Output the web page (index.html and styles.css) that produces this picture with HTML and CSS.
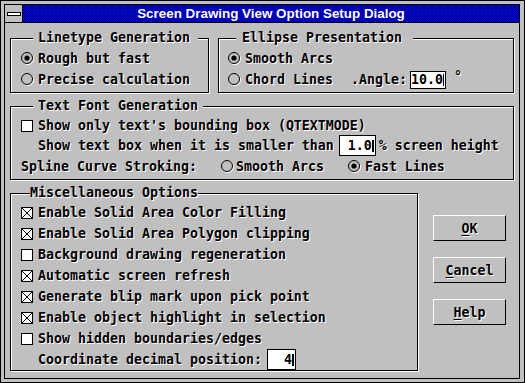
FILE: index.html
```html
<!doctype html>
<html lang="en">
<head>
<meta charset="UTF-8">
<title>Screen Drawing View Option Setup Dialog</title>
<link rel="stylesheet" href="styles.css">
</head>
<body>
<svg class="defs" width="0" height="0" aria-hidden="true">
    <symbol id="radioOff" viewBox="0 0 13 13">
        <circle cx="7" cy="7" r="5.5" fill="none" stroke="#fff"/>
        <circle cx="6" cy="6" r="5.5" fill="#c0c0c0" stroke="#000"/>
    </symbol>
    <symbol id="radioOn" viewBox="0 0 13 13">
        <circle cx="7" cy="7" r="5.5" fill="none" stroke="#fff"/>
        <circle cx="6" cy="6" r="5.5" fill="#c0c0c0" stroke="#000"/>
        <circle cx="6" cy="6" r="2.6" fill="#000"/>
    </symbol>
    <symbol id="checkOff" viewBox="0 0 12 12">
        <rect x=".5" y=".5" width="11" height="11" fill="#fff" stroke="#000" shape-rendering="crispEdges"/>
    </symbol>
    <symbol id="checkOn" viewBox="0 0 12 12">
        <rect x=".5" y=".5" width="11" height="11" fill="#fff" stroke="#000" shape-rendering="crispEdges"/>
        <path d="M1 1 11 11 M11 1 1 11" stroke="#000" stroke-width="1"/>
    </symbol>
</svg>

<div class="window">
<div class="frame">
    <div class="titlebar">
        <div class="sysmenu"><div class="sysbar"></div></div>
        <div class="caption">Screen Drawing View Option Setup Dialog</div>
    </div>
    <div class="client">
        <div class="rowTop">
            <div class="group groupLinetype">
                <div class="groupTitle">Linetype Generation</div>
                <div class="opt"><svg class="radio"><use href="#radioOn"/></svg>Rough but fast</div>
                <div class="opt"><svg class="radio"><use href="#radioOff"/></svg>Precise calculation</div>
            </div>
            <div class="group groupEllipse">
                <div class="groupTitle">Ellipse Presentation</div>
                <div class="opt"><svg class="radio"><use href="#radioOn"/></svg>Smooth Arcs</div>
                <div class="opt">
                    <svg class="radio"><use href="#radioOff"/></svg><span>Chord Lines</span>
                    <span class="angleLabel">.Angle:</span>
                    <div class="field fieldAngle">10.0<span class="caret"></span></div>
                    <span class="degree">&deg;</span>
                </div>
            </div>
        </div>

        <div class="group groupText">
            <div class="groupTitle">Text Font Generation</div>
            <div class="opt optShort"><svg class="check"><use href="#checkOff"/></svg>Show only text's bounding box (QTEXTMODE)</div>
            <div class="opt">
                <span class="indent">Show text box when it is smaller than</span>
                <div class="field fieldHeight">1.0<span class="caret"></span></div>
                <span class="unit">% screen height</span>
            </div>
            <div class="opt">
                <span>Spline Curve Stroking:</span>
                <svg class="radio radioSmooth"><use href="#radioOff"/></svg><span>Smooth Arcs</span>
                <svg class="radio radioFast"><use href="#radioOn"/></svg><span>Fast Lines</span>
            </div>
        </div>

        <div class="rowBottom">
            <div class="group groupMisc">
                <div class="groupTitle">Miscellaneous Options</div>
                <div class="opt"><svg class="check"><use href="#checkOn"/></svg>Enable Solid Area Color Filling</div>
                <div class="opt"><svg class="check"><use href="#checkOn"/></svg>Enable Solid Area Polygon clipping</div>
                <div class="opt"><svg class="check"><use href="#checkOff"/></svg>Background drawing regeneration</div>
                <div class="opt"><svg class="check"><use href="#checkOn"/></svg>Automatic screen refresh</div>
                <div class="opt"><svg class="check"><use href="#checkOn"/></svg>Generate blip mark upon pick point</div>
                <div class="opt"><svg class="check"><use href="#checkOn"/></svg>Enable object highlight in selection</div>
                <div class="opt"><svg class="check"><use href="#checkOff"/></svg>Show hidden boundaries/edges</div>
                <div class="opt">
                    <span class="indent">Coordinate decimal position:</span>
                    <div class="field fieldDecimal">4<span class="caret"></span></div>
                </div>
            </div>
            <div class="buttons">
                <div class="button"><u>O</u>K</div>
                <div class="button"><u>C</u>ancel</div>
                <div class="button"><u>H</u>elp</div>
            </div>
        </div>
    </div>
</div>
</div>
</body>
</html>
```

FILE: styles.css
```css
*,
*:after,
*:before {
    box-sizing: border-box;
}
body {
    background: #c0c0c0;
    color: #000;
    font-family: "DejaVu Sans Mono", monospace;
    font-size: 13.29px;
    font-weight: bold;
    margin: 0;
}
.defs {
    display: block;
    height: 0;
    width: 0;
}
.window {
    background: #c0c0c0;
    border: 1px solid #000;
    display: flex;
    flex-direction: column;
    height: 383px;
    padding: 3px 4px 3px 3px;
    width: 525px;
}
.frame {
    border: 1px solid #000;
    display: flex;
    flex: 1;
    flex-direction: column;
}
.titlebar {
    border-bottom: 1px solid #000;
    display: flex;
    height: 18px;
}
.sysmenu {
    background: #c0c0c0;
    border-right: 1px solid #000;
    height: 17px;
    width: 18px;
}
.sysbar {
    background: #fff;
    border: 1px solid #000;
    height: 4px;
    margin: 7px 0 0 2px;
    width: 14px;
}
.caption {
    background: repeating-conic-gradient(#0000f0 0 25%, #000080 0 50%) 0 0 / 2px 2px;
    color: #fff;
    flex: 1;
    font-family: "Liberation Sans", Arial, sans-serif;
    font-size: 13.4px;
    font-weight: bold;
    line-height: 18px;
    text-align: center;
}
.client {
    display: flex;
    flex: 1;
    flex-direction: column;
    gap: 13px;
    padding: 15px 5px 0 5px;
    text-shadow: 1px 1px 0 #fff;
}
.rowTop {
    display: flex;
    gap: 9px;
    height: 55px;
}
.rowBottom {
    display: flex;
    height: 178px;
}
.group {
    border: 1px solid #000;
    box-shadow: inset 1px 1px 0 #fff, 1px 1px 0 #fff;
    display: flex;
    flex-direction: column;
    padding-left: 10px;
}
.groupTitle {
    align-self: flex-start;
    background: #c0c0c0;
    line-height: 14px;
    margin: -8px 0 3px 12px;
    padding: 0 8px 0 5px;
    white-space: pre;
}
.groupLinetype {
    width: 199px;
}
.groupEllipse {
    flex: 1;
    padding-left: 9px;
}
.groupEllipse .groupTitle {
    margin-left: 8px;
    padding: 0 11px 0 6px;
}
.groupText {
    height: 74px;
}
.groupText .groupTitle {
    padding: 0 5px;
}
.groupMisc {
    width: 408px;
}
.groupMisc .groupTitle {
    margin: -8px 0 2px 9px;
    padding: 0;
}
.opt {
    align-items: center;
    display: flex;
    flex: none;
    height: 21px;
    white-space: pre;
}
.optShort {
    height: 19px;
}
.radio {
    flex: none;
    height: 13px;
    margin-right: 4px;
    width: 13px;
}
.radioSmooth {
    margin: 0 2px 0 24px;
}
.radioFast {
    margin: 0 4px 0 24px;
}
.check {
    flex: none;
    height: 12px;
    margin-right: 5px;
    width: 12px;
}
.indent {
    margin-left: 17px;
}
.angleLabel {
    margin-left: 18px;
}
.field {
    align-items: center;
    background: #fff;
    border: 1px solid #000;
    display: flex;
    justify-content: flex-end;
    padding-right: 1px;
    text-shadow: none;
}
.caret {
    background: #000;
    height: 12px;
    width: 2px;
}
.fieldAngle {
    height: 18px;
    margin-left: 3px;
    width: 36px;
}
.fieldHeight {
    height: 21px;
    margin-left: 5px;
    width: 37px;
}
.fieldDecimal {
    height: 21px;
    margin-left: 5px;
    width: 29px;
}
.degree {
    align-self: flex-start;
    line-height: 16px;
    margin-left: 8px;
}
.unit {
    margin-left: 3px;
}
.buttons {
    display: flex;
    flex-direction: column;
    gap: 16px;
    margin-left: 15px;
    padding-top: 22px;
    width: 73px;
}
.button {
    align-items: center;
    border-bottom: 1px solid #000;
    border-left: 1px solid #fff;
    border-right: 1px solid #000;
    border-top: 1px solid #fff;
    display: flex;
    height: 26px;
    justify-content: center;
}
.button u {
    text-decoration-thickness: 1px;
    text-underline-offset: 2px;
}
```
